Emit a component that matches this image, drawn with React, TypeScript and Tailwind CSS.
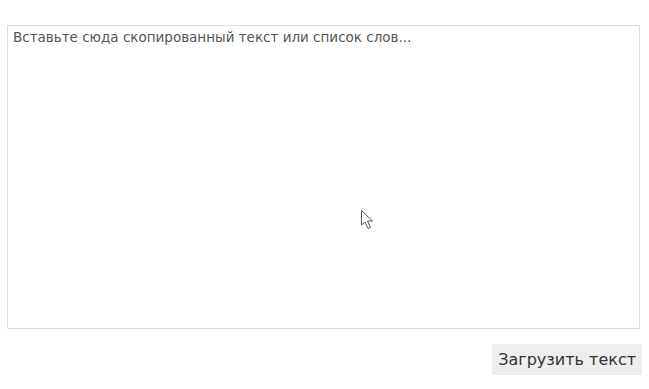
import React from 'react';

export default function App() {
  return (
    <div className="relative w-[649px] h-[389px] bg-white font-['DejaVu_Sans',sans-serif] text-[#333]">
      <div className="pl-[7px] pt-[25px] w-[642px] flex flex-col">
        <textarea
          className="w-[633px] h-[304px] resize-none border border-[#dedede] outline-none px-[5px] pt-[2px] text-[13.5px] leading-[18px] placeholder:text-[#555]"
          placeholder="Вставьте сюда скопированный текст или список слов..."
        />
        <div className="flex justify-end mt-[15px]">
          <button className="h-[31px] px-[6px] bg-[#eeeeee] text-[16px] text-[#333] leading-[31px]">
            Загрузить текст
          </button>
        </div>
      </div>

      {/* mouse pointer captured in the screenshot */}
      <svg className="absolute left-[360px] top-[209px]" width="14" height="22" viewBox="0 0 14 22">
        <path d="M1.5 1.5 L1.5 16 L5 13 L8 19.5 L10.5 18.5 L7.5 12 L12.5 12 Z" fill="#fff" stroke="#555" strokeWidth="1" strokeLinejoin="round" />
      </svg>
    </div>
  );
}
